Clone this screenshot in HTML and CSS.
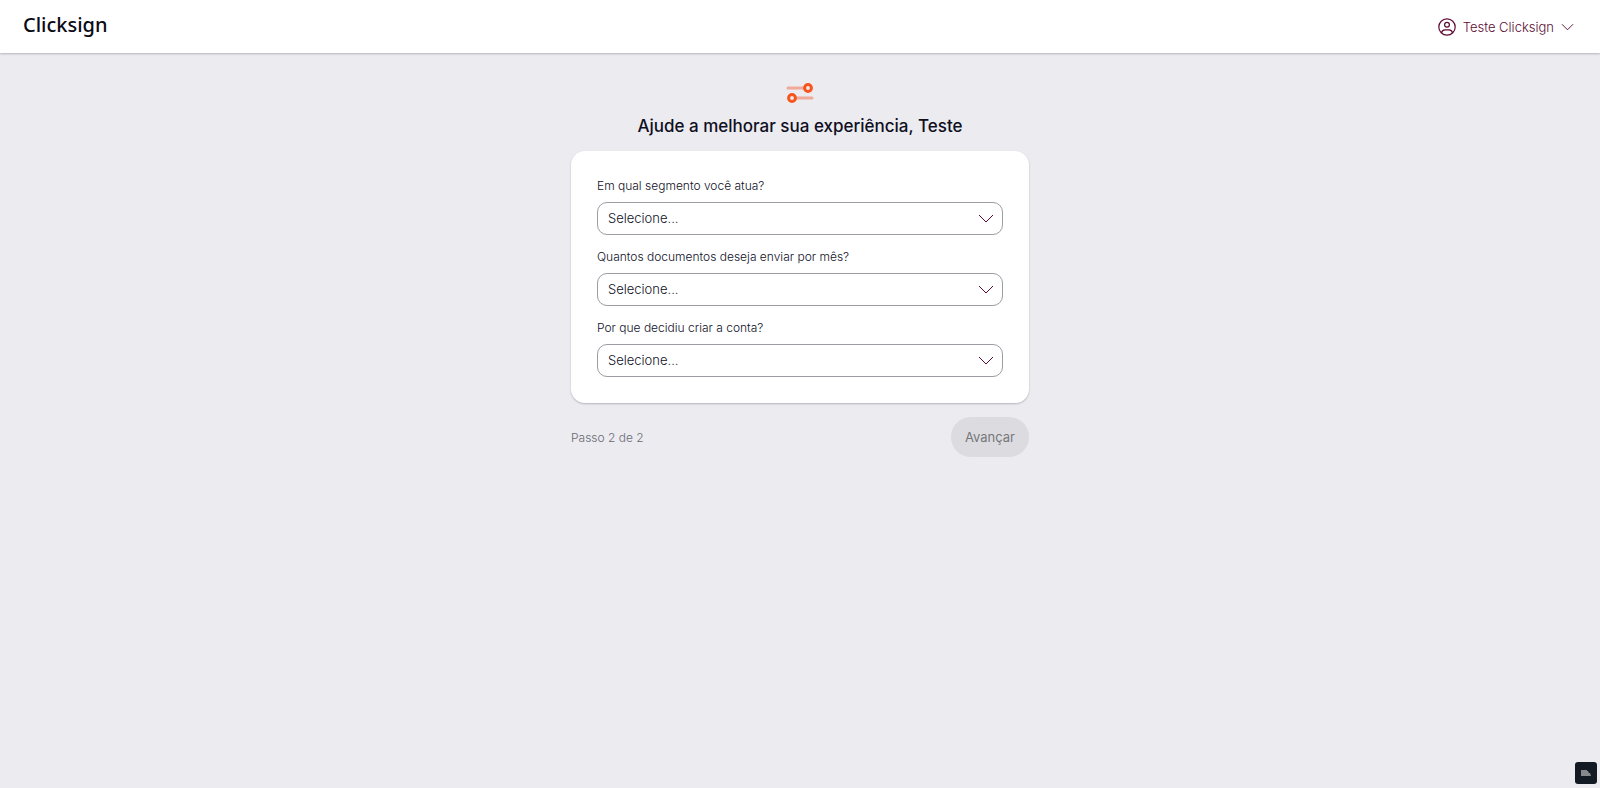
FILE: index.html
```html
<!DOCTYPE html>
<html lang="pt-BR">
<head>
    <meta charset="UTF-8">
    <meta name="viewport" content="width=device-width, initial-scale=1.0">
    <title>Clicksign</title>
    <link rel="stylesheet" href="styles.css">
</head>
<body>
    <header class="topbar">
        <a class="logo" href="#">Clicksign</a>
        <button class="account" type="button">
            <svg class="user-icon" viewBox="0 0 18 18" aria-hidden="true">
                <circle cx="9" cy="9" r="8.200"/>
                <circle cx="9" cy="6.800" r="2.400"/>
                <path d="M3.500 15c.3-2 1.500-3.200 3.500-3.200h4c2 0 3.200 1.200 3.500 3.200"/>
            </svg>
            <span>Teste Clicksign</span>
            <svg class="chevron" viewBox="0 0 14 8" aria-hidden="true"><path d="M1 1l6 6 6-6"/></svg>
        </button>
    </header>

    <main class="content">
        <svg class="sliders" viewBox="0 0 28 20" aria-hidden="true">
            <path d="M2 5h16M11 15h15"/>
            <circle cx="22" cy="5" r="3.400"/>
            <circle cx="6" cy="15" r="3.400"/>
        </svg>
        <h1 class="title">Ajude a melhorar sua experiência, Teste</h1>

        <form class="survey">
            <div class="card">
                <div class="field">
                    <label for="segmento">Em qual segmento você atua?</label>
                    <div class="select">
                        <select id="segmento"><option>Selecione...</option></select>
                        <svg class="chevron" viewBox="0 0 16 9" aria-hidden="true"><path d="M1 1l7 7 7-7"/></svg>
                    </div>
                </div>
                <div class="field">
                    <label for="documentos">Quantos documentos deseja enviar por mês?</label>
                    <div class="select">
                        <select id="documentos"><option>Selecione...</option></select>
                        <svg class="chevron" viewBox="0 0 16 9" aria-hidden="true"><path d="M1 1l7 7 7-7"/></svg>
                    </div>
                </div>
                <div class="field">
                    <label for="motivo">Por que decidiu criar a conta?</label>
                    <div class="select">
                        <select id="motivo"><option>Selecione...</option></select>
                        <svg class="chevron" viewBox="0 0 16 9" aria-hidden="true"><path d="M1 1l7 7 7-7"/></svg>
                    </div>
                </div>
            </div>
            <div class="actions">
                <span class="step">Passo 2 de 2</span>
                <button class="next" type="submit" disabled>Avançar</button>
            </div>
        </form>
    </main>

    <button class="widget" type="button" aria-label="Widget">
        <svg viewBox="0 0 12 8" aria-hidden="true"><path d="M1 1h6v1h1l1 2h1l1 3H1z"/></svg>
    </button>
</body>
</html>
```
FILE: styles.css
```css
* {
    margin: 0;
    padding: 0;
    box-sizing: border-box;
}

body {
    min-height: 100vh;
    background: #ebebf0;
    color: #0f0f1f;
    font-family: Inter, "Liberation Sans", sans-serif;
    font-size: 13px;
    font-weight: 300;
}

button, select {
    font: inherit;
    color: inherit;
    border: 0;
    background: none;
}

.topbar {
    display: flex;
    align-items: center;
    justify-content: space-between;
    height: 53px;
    padding: 0 26px 0 23px;
    background: #fff;
    box-shadow: 0 1px 2px rgba(15, 15, 40, 0.25);
}

.logo {
    padding-bottom: 4px;
    font-family: "Noto Sans", sans-serif;
    font-size: 20px;
    font-weight: 500;
    line-height: 28px;
    color: #0a0a14;
    text-decoration: none;
}

.account {
    display: flex;
    align-items: center;
    gap: 7px;
    color: #5c0a33;
    cursor: pointer;
}

.user-icon {
    width: 18px;
    height: 18px;
    fill: none;
    stroke: currentColor;
    stroke-width: 1.2;
}

.chevron {
    width: 13px;
    height: 8px;
    fill: none;
    stroke: #5c0a33;
}

.content {
    display: flex;
    flex-direction: column;
    align-items: center;
    padding: 30px 16px;
}

.sliders {
    width: 28px;
    height: 20px;
    fill: none;
    stroke: #f8551c;
    stroke-width: 3;
}

.sliders path {
    stroke: #f1aa9a;
    stroke-linecap: round;
}

.title {
    margin: 11px 0 13px;
    font-size: 17px;
    font-weight: 500;
    line-height: 24px;
    text-align: center;
}

.survey {
    width: 100%;
    max-width: 458px;
}

.card {
    display: flex;
    flex-direction: column;
    gap: 13px;
    padding: 26px;
    background: #fff;
    border-radius: 14px;
    box-shadow: 0 1px 2px rgba(15, 15, 40, 0.25);
}

.field {
    display: flex;
    flex-direction: column;
    gap: 7px;
}

.field label {
    font-size: 12px;
    line-height: 18px;
}

.select {
    display: grid;
    align-items: center;
}

.select select,
.select .chevron {
    grid-area: 1 / 1;
}

.select select {
    appearance: none;
    width: 100%;
    height: 33px;
    padding: 0 36px 2px 10px;
    border: 1px solid #9c9ca4;
    border-radius: 10px;
}

.select .chevron {
    justify-self: end;
    width: 16px;
    height: 9px;
    margin-right: 9px;
    pointer-events: none;
}

.actions {
    display: flex;
    align-items: center;
    justify-content: space-between;
    margin-top: 14px;
}

.step {
    font-size: 12px;
    color: #6a6a74;
}

.next {
    height: 40px;
    padding: 0 14px;
    border-radius: 20px;
    background: #dcdce0;
    color: #77777c;
    font-weight: 400;
}

.widget {
    position: fixed;
    right: 3px;
    bottom: 4px;
    display: flex;
    align-items: center;
    justify-content: center;
    width: 22px;
    height: 22px;
    border-radius: 3px;
    background: #141a24;
}

.widget svg {
    width: 12px;
    height: 8px;
    fill: #85888c;
}
```
